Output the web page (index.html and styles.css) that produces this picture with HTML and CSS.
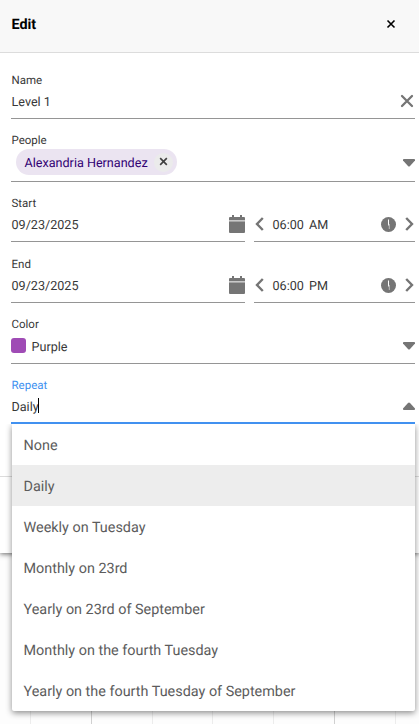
FILE: index.html
```html
<!DOCTYPE html>
<html lang="en">

<head>
    <meta charset="utf-8">
    <meta name="viewport" content="width=device-width, initial-scale=1.0">
    <title>Edit</title>
    <link rel="stylesheet" href="styles.css">
</head>

<body>
    <main class="editor">
        <header class="editor-header">
            <h1>Edit</h1>
            <svg class="close" viewBox="0 0 10 10"><path d="M1.5 1.5l7 7M8.5 1.5l-7 7"/></svg>
        </header>

        <form class="fields">
            <div class="field">
                <label>Name</label>
                <div class="input">
                    <span class="value">Level 1</span>
                    <svg class="clear" viewBox="0 0 14 14"><path d="M2 2l10 10M12 2L2 12"/></svg>
                </div>
            </div>

            <div class="field people">
                <label>People</label>
                <div class="input">
                    <span class="chip">
                        <span class="chip-name">Alexandria Hernandez</span>
                        <span class="chip-close"><svg viewBox="0 0 10 10"><path d="M1.3 1.3l7.4 7.4M8.7 1.3L1.3 8.7"/></svg></span>
                    </span>
                    <svg class="arrow" viewBox="0 0 12 8"><path d="M.8 0h10.4q.8 0 .8 1v.5L7 7q-1 1-2 0L0 1.5V1q0-1 .8-1z"/></svg>
                </div>
            </div>

            <div class="field start">
                <label>Start</label>
                <div class="date-time">
                    <div class="input">
                        <span class="value">09/23/2025</span>
                        <svg class="calendar" viewBox="0 0 16 18"><path d="M0 5V3q0-1 1-1h2V0h2v2h6V0h2v2h2q1 0 1 1v2zM0 6.3h16V17q0 1-1 1H1q-1 0-1-1z"/><path class="band" d="M0 5h16v1.3H0z"/></svg>
                    </div>
                    <div class="input time">
                        <svg class="chevron" viewBox="0 0 9 14"><path d="M7.8 1L2 7l5.8 6"/></svg>
                        <span class="value">06:00 AM</span>
                        <svg class="clock" viewBox="0 0 15 15"><circle cx="7.5" cy="7.5" r="7.5"/><path d="M7.5 2.5v6"/><path class="hand" d="M8.3 7v5"/></svg>
                        <svg class="chevron" viewBox="0 0 9 14"><path d="M1.2 1L7 7l-5.8 6"/></svg>
                    </div>
                </div>
            </div>

            <div class="field">
                <label>End</label>
                <div class="date-time">
                    <div class="input">
                        <span class="value">09/23/2025</span>
                        <svg class="calendar" viewBox="0 0 16 18"><path d="M0 5V3q0-1 1-1h2V0h2v2h6V0h2v2h2q1 0 1 1v2zM0 6.3h16V17q0 1-1 1H1q-1 0-1-1z"/><path class="band" d="M0 5h16v1.3H0z"/></svg>
                    </div>
                    <div class="input time">
                        <svg class="chevron" viewBox="0 0 9 14"><path d="M7.8 1L2 7l5.8 6"/></svg>
                        <span class="value">06:00 PM</span>
                        <svg class="clock" viewBox="0 0 15 15"><circle cx="7.5" cy="7.5" r="7.5"/><path d="M7.5 2.5v6"/><path class="hand" d="M8.3 7v5"/></svg>
                        <svg class="chevron" viewBox="0 0 9 14"><path d="M1.2 1L7 7l-5.8 6"/></svg>
                    </div>
                </div>
            </div>

            <div class="field color">
                <label>Color</label>
                <div class="input">
                    <span class="swatch"></span>
                    <span class="value">Purple</span>
                    <svg class="arrow" viewBox="0 0 12 8"><path d="M.8 0h10.4q.8 0 .8 1v.5L7 7q-1 1-2 0L0 1.5V1q0-1 .8-1z"/></svg>
                </div>
            </div>

            <div class="field active">
                <label>Repeat</label>
                <div class="input">
                    <span class="value">Daily</span>
                    <span class="caret"></span>
                    <svg class="arrow up" viewBox="0 0 12 8"><path d="M.8 0h10.4q.8 0 .8 1v.5L7 7q-1 1-2 0L0 1.5V1q0-1 .8-1z"/></svg>
                </div>
                <ul class="menu">
                    <li>None</li>
                    <li class="selected">Daily</li>
                    <li>Weekly on Tuesday</li>
                    <li>Monthly on 23rd</li>
                    <li>Yearly on 23rd of September</li>
                    <li>Monthly on the fourth Tuesday</li>
                    <li>Yearly on the fourth Tuesday of September</li>
                </ul>
            </div>
        </form>

        <footer class="editor-footer"></footer>
    </main>

    <!-- schedule columns below the editor -->
    <div class="schedule">
        <span></span><span class="major"></span><span></span><span></span><span></span><span class="major"></span><span></span>
    </div>
</body>

</html>
```

FILE: styles.css
```css
* {
    box-sizing: border-box;
}

body {
    margin: 0;
    height: 724px;
    display: flex;
    flex-direction: column;
    overflow: hidden;
    font-family: Roboto, sans-serif;
    font-size: 12.6px;
    text-rendering: geometricPrecision;
    color: #383838;
    background-color: #fdfdfd;
}

svg {
    display: block;
    flex: none;
    fill: none;
    stroke: #757575;
}

.editor {
    position: relative;
    z-index: 1;
    height: 553px;
    display: flex;
    flex-direction: column;
    background-color: #fff;
    box-shadow: 0 1px 5px rgba(0, 0, 0, 0.6);
}

.editor-header {
    height: 53px;
    display: flex;
    align-items: center;
    justify-content: space-between;
    padding: 0 23px 4px 11.5px;
    background-color: #f8f8f8;
    border-bottom: 1px solid #dcdcdc;
}

.editor-header h1 {
    margin: 0;
    padding-top: 1px;
    font-size: 14.4px;
    font-weight: 700;
    color: #000;
}

.close {
    width: 10px;
    height: 10px;
    stroke: #000;
    stroke-width: 1.6;
}

.fields {
    flex: 1;
    display: flex;
    flex-direction: column;
    gap: 14px;
    padding: 20px 4px 0 11px;
}

.field {
    position: relative;
    height: 46px;
    display: flex;
    flex-direction: column;
}

.field label {
    height: 14px;
    padding-left: 0.5px;
    font-size: 11.5px;
    line-height: 14px;
}

.input {
    flex: 1;
    display: flex;
    align-items: center;
    padding: 0 0 3px 0.5px;
    border-bottom: 1px solid #959595;
}

.value {
    padding-top: 4px;
    line-height: 16px;
}

.clear {
    width: 14px;
    height: 14px;
    margin: 0 1px 0 auto;
    stroke-width: 2.3;
    stroke-linecap: round;
}

.people {
    height: 49px;
}

.people .input {
    padding: 0 0 4px 5px;
}

.chip {
    height: 26px;
    display: flex;
    align-items: center;
    gap: 6.5px;
    padding: 0 4px 0 8.5px;
    border-radius: 13px;
    color: #310073;
    background-color: #ebe4f1;
}

.chip-name {
    padding-top: 2px;
}

.chip-close {
    width: 19px;
    height: 19px;
    display: flex;
    justify-content: center;
    padding-top: 4px;
    border-radius: 50%;
    background-color: #ebebeb;
}

.chip-close svg {
    width: 9px;
    height: 9px;
    stroke: #404040;
    stroke-width: 1.8;
}

.arrow {
    width: 12px;
    height: 8px;
    margin: 1px 0 0 auto;
    fill: #757575;
    stroke: none;
}

.up {
    margin-top: 0;
    transform: rotate(180deg);
}

.date-time {
    flex: 1;
    display: grid;
    grid-template-columns: 234px 161px;
    gap: 9px;
}

.start {
    margin-bottom: 1px;
}

.calendar {
    width: 16px;
    height: 18px;
    margin-left: auto;
    fill: #757575;
    stroke: none;
}

.calendar .band {
    fill: #c8c8c8;
}

.chevron {
    width: 9px;
    height: 14px;
    stroke-width: 2.4;
}

.time .value {
    margin-left: 9px;
    word-spacing: 2px;
}

.time .clock {
    width: 15px;
    height: 15px;
    margin-left: auto;
    margin-right: 9px;
}

.clock circle {
    fill: #757575;
    stroke: none;
}

.clock path {
    stroke: #fff;
}

.clock .hand {
    stroke: #bdbdbd;
}

.time {
    padding-right: 1px;
}

.color {
    height: 47px;
}

.color .value,
.active .value {
    padding-top: 5px;
}

.swatch {
    width: 15px;
    height: 15px;
    margin: 0 5.5px 0 -0.5px;
    border-radius: 3px;
    background-color: #9f4bb5;
}

.active label {
    color: #4191f0;
}

.active .input {
    border-bottom: 2px solid #4191f0;
}

.caret {
    width: 1px;
    height: 15px;
    margin-left: -1px;
    background-color: #000;
}

.menu {
    position: absolute;
    z-index: 2;
    top: 46px;
    left: 1px;
    right: 0;
    margin: 0;
    padding: 0;
    list-style: none;
    font-size: 14.4px;
    color: #5c5c5c;
    background-color: #fff;
    border-radius: 0 0 2px 2px;
    box-shadow: 0 2px 6px rgba(0, 0, 0, 0.45);
    clip-path: inset(0 -12px -12px -12px);
}

.menu li {
    height: 41px;
    padding: 1px 0 0 11.5px;
    line-height: 41px;
}

.menu .selected {
    background-color: #ededed;
}

.editor-footer {
    height: 77px;
    border-top: 1px solid #dcdcdc;
}

.schedule {
    flex: 1;
    display: grid;
    grid-template-columns: 31px repeat(6, 60.8px);
}

.schedule span {
    border-right: 1px solid #ececec;
}

.schedule .major {
    border-right-color: #d0d0d0;
}
```
